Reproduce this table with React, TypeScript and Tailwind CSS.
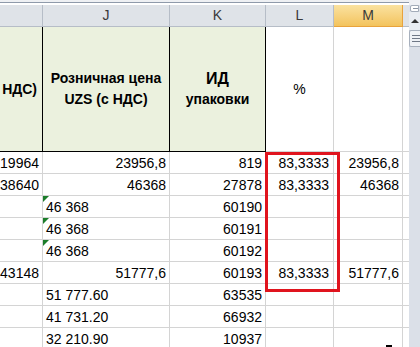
type Row = {
  i?: string;
  j?: string;
  jLeft?: boolean;
  flag?: boolean;
  k?: string;
  l?: string;
  m?: string;
};

const rows: Row[] = [
  { i: "19964", j: "23956,8", k: "819", l: "83,3333", m: "23956,8" },
  { i: "38640", j: "46368", k: "27878", l: "83,3333", m: "46368" },
  { j: "46 368", jLeft: true, flag: true, k: "60190" },
  { j: "46 368", jLeft: true, flag: true, k: "60191" },
  { j: "46 368", jLeft: true, flag: true, k: "60192" },
  { i: "43148", j: "51777,6", k: "60193", l: "83,3333", m: "51777,6" },
  { j: "51 777.60", jLeft: true, k: "63535" },
  { j: "41 731.20", jLeft: true, k: "66932" },
  { j: "32 210.90", jLeft: true, k: "10937" },
];

const cell = "h-[22px] border-r border-b border-[#d4d4d4] flex items-end pb-[3px] leading-none whitespace-nowrap overflow-hidden";

const ColHead = ({ label, selected }: { label?: string; selected?: boolean }) => (
  <div
    className={
      selected
        ? "h-[22px] flex items-center justify-center bg-gradient-to-b from-[#fae29f] to-[#f3c35c] border-r border-b border-[#e9a33c] text-[#3a3a3a]"
        : "h-[22px] flex items-center justify-center bg-[#dfe3e8] border-r border-b border-[#b6bdc7] text-[#3a3a3a]"
    }
  >
    {label}
  </div>
);

const Scrollbar = () => (
  <div className="w-[11px] h-full bg-[#dbe0e8] flex flex-col">
    <div className="h-[5px] bg-[#eef0f4]" />
    <div className="h-[7px] mx-px bg-white border border-[#a3acb9] rounded-l-[2px] flex flex-col justify-center gap-px pl-[2px]">
      <div className="h-px bg-[#8a94a3]" />
    </div>
    <div className="h-[18px] bg-[#e9edf2] flex items-center justify-center">
      <div className="w-0 h-0 border-l-[4px] border-r-[4px] border-b-[4px] border-l-transparent border-r-transparent border-b-[#333]" />
    </div>
    <div className="h-[17px] bg-[#eef1f5] border border-r-0 border-[#a7b0bd] rounded-l-[2px] flex flex-col justify-center gap-[2px] pl-[2px]">
      <div className="h-px bg-[#6f7886]" />
      <div className="h-px bg-[#6f7886]" />
      <div className="h-px bg-[#6f7886]" />
    </div>
    <div className="flex-1" />
  </div>
);

export default function App() {
  return (
    <div className="w-[420px] h-[347px] overflow-hidden bg-white flex font-['Liberation_Sans',Arial,sans-serif] text-[14px] text-black">
      <div className="w-[409px] relative">
        <div className="h-[2px] bg-[#eef0f3]" />
        <div className="h-px bg-[#8f9aaa]" />
        <div className="h-[2px] bg-white" />

        <div className="grid grid-cols-[43px_127px_96px_68px_69px_6px]">
          <ColHead />
          <ColHead label="J" />
          <ColHead label="K" />
          <ColHead label="L" />
          <ColHead label="M" selected />
          <div className="h-[22px] bg-[#dfe3e8] border-b border-[#b6bdc7]" />

          <div className="h-[125px] bg-[#ebf1de] border-r border-b border-black flex items-center justify-end pr-[5px] font-bold whitespace-nowrap">
            НДС)
          </div>
          <div className="h-[125px] bg-[#ebf1de] border-r border-b border-black flex flex-col items-center justify-center font-bold leading-[21px]">
            <span>Розничная цена</span>
            <span>UZS (с НДС)</span>
          </div>
          <div className="h-[125px] bg-[#ebf1de] border-r border-b border-black flex flex-col items-center justify-center font-bold leading-[21px]">
            <span className="text-[16px]">ИД</span>
            <span>упаковки</span>
          </div>
          <div className="h-[125px] border-r border-b border-[#d4d4d4] flex items-center justify-center">%</div>
          <div className="h-[125px] border-r border-b border-[#d4d4d4]" />
          <div className="h-[125px] border-b border-[#d4d4d4]" />

          {rows.map((r, idx) => (
            <div key={idx} className="contents">
              <div className={`${cell} justify-end pr-[3px]`}>{r.i}</div>
              <div className={`${cell} relative ${r.jLeft ? "justify-start pl-[3px]" : "justify-end pr-[3px]"}`}>
                {r.flag && (
                  <div className="absolute left-0 top-0 w-0 h-0 border-t-[6px] border-r-[6px] border-t-[#1b7d2a] border-r-transparent" />
                )}
                {r.j}
              </div>
              <div className={`${cell} justify-end pr-[3px]`}>{r.k}</div>
              <div className={`${cell} justify-end pr-[4px]`}>{r.l}</div>
              <div className={`${cell} justify-end pr-[3px]`}>{r.m}</div>
              <div className="h-[22px] border-b border-[#d4d4d4]" />
            </div>
          ))}
        </div>

        {/* highlight frame around the % column values */}
        <div className="absolute left-[265px] top-[152px] w-[75px] h-[140px] border-[3px] border-[#e0141e]" />
        <div className="absolute left-[386px] top-[345px] w-[6px] h-[2px] bg-black" />
      </div>
      <Scrollbar />
    </div>
  );
}
